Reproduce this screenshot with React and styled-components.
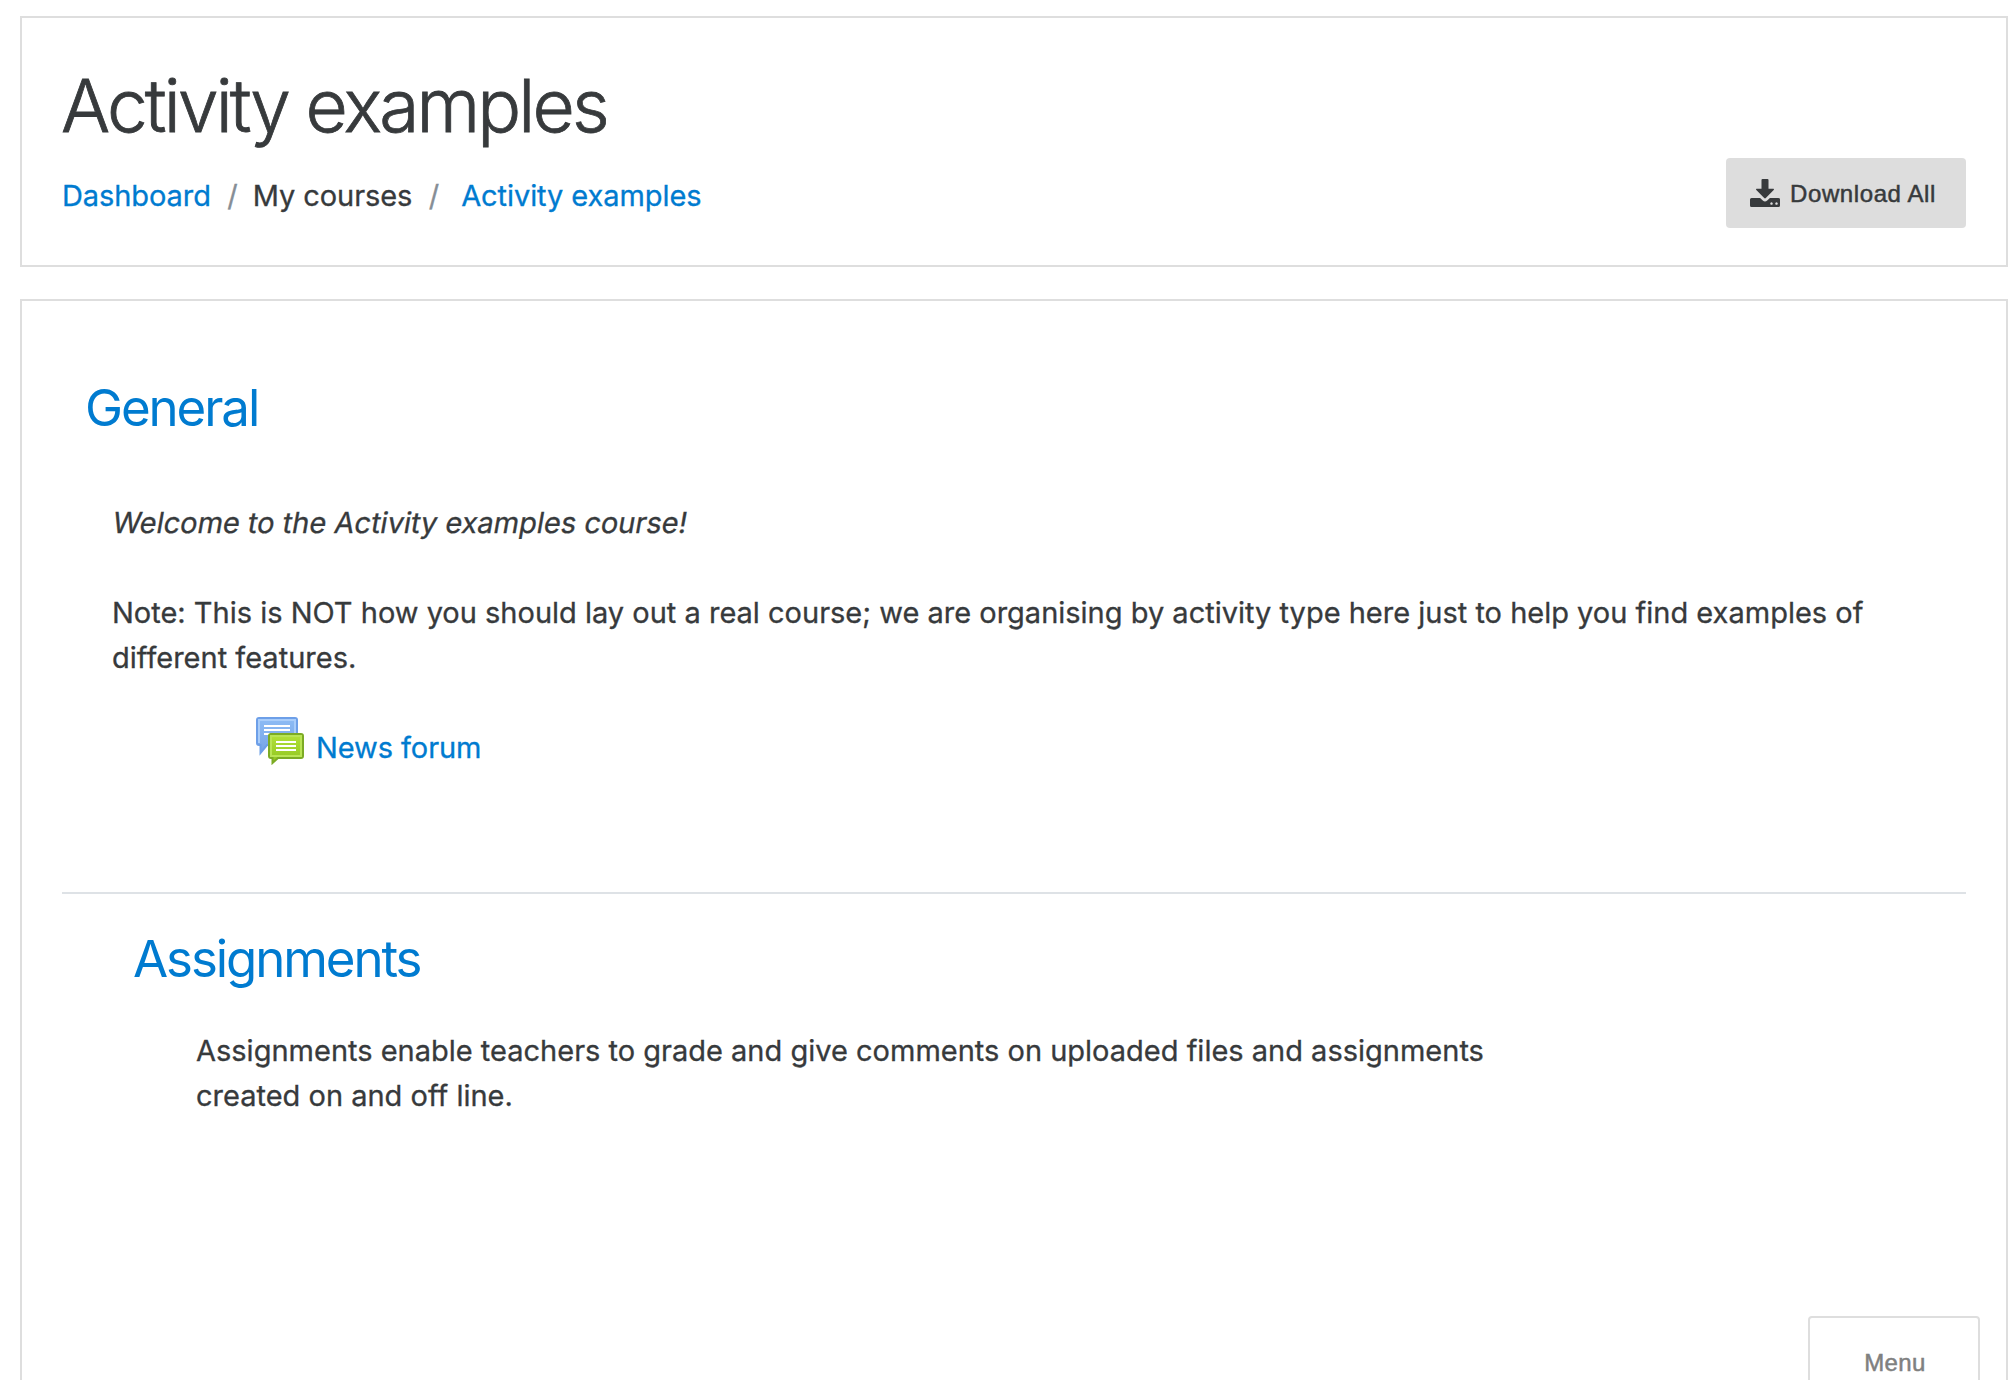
import React from 'react';
import styled, { createGlobalStyle } from 'styled-components';

function App() {
  return (
    <Page>
      <GlobalStyle />
      <Header>
        <div>
          <Title>Activity examples</Title>
          <Breadcrumb>
            <Link href="#">Dashboard</Link>
            <Slash>/</Slash>
            <span>My courses</span>
            <Slash>/</Slash>
            <LastCrumb href="#">Activity examples</LastCrumb>
          </Breadcrumb>
        </div>
        <DownloadButton>
          <DownloadIcon />
          <span>Download All</span>
        </DownloadButton>
      </Header>
      <Content>
        <GeneralSection>
          <SectionTitle>General</SectionTitle>
          <GeneralSummary>
            <Welcome>Welcome to the Activity examples course!</Welcome>
            <Note>
              Note: This is NOT how you should lay out a real course; we are
              organising by activity type here just to help you find examples
              of
              <br />
              different features.
            </Note>
          </GeneralSummary>
          <Activity>
            <ForumIcon />
            <ActivityLink href="#">News forum</ActivityLink>
          </Activity>
        </GeneralSection>
        <Topic>
          <SectionTitle $topic>Assignments</SectionTitle>
          <TopicSummary>
            Assignments enable teachers to grade and give comments on uploaded
            files and assignments
            <br />
            created on and off line.
          </TopicSummary>
        </Topic>
      </Content>
      <MenuButton>Menu</MenuButton>
    </Page>
  );
}

function DownloadIcon() {
  return (
    <svg width="30" height="28" viewBox="0 0 30 28" fill="#373a3c">
      <path d="M12.500 0h5q1 0 1 1v8.800h4.700q1.400 0 .5 1.100L15.800 19q-.8.800-1.600 0L6.300 10.900q-.9-1.100.5-1.100h4.700V1q0-1 1-1z" />
      <path
        fillRule="evenodd"
        d="M1.500 19h8.600l2.700 2.600q2.200 2 4.400 0l2.700-2.600h8.600q1.500 0 1.500 1.500v6q0 1.500-1.500 1.500h-27q-1.500 0-1.500-1.500v-6q0-1.500 1.500-1.500zM21.500 23.300a1.250 1.250 0 1 0 .01 0zM26.500 23.300a1.250 1.250 0 1 0 .01 0z"
      />
    </svg>
  );
}

function ForumIcon() {
  return (
    <svg width="48" height="48" viewBox="0 0 48 48">
      <defs>
        <linearGradient id="blue" x1="0" y1="0" x2="0" y2="1">
          <stop offset="0" stopColor="#8dbcf5" />
          <stop offset="1" stopColor="#76a3e6" />
        </linearGradient>
        <linearGradient id="green" x1="0" y1="0" x2="0" y2="1">
          <stop offset="0" stopColor="#b4e23a" />
          <stop offset="1" stopColor="#8fc41f" />
        </linearGradient>
      </defs>
      <path
        d="M3 1h36q2 0 2 2v25H11l-6.500 8v-8H3q-2 0-2-2V3q0-2 2-2z"
        fill="url(#blue)"
        stroke="#6d9fe8"
        strokeWidth="2"
      />
      <path d="M3 26V3h36v13" fill="none" stroke="#a9cdfa" strokeWidth="2" />
      <path d="M8 9h26M8 13h26M8 17h6" stroke="#fff" strokeWidth="2" />
      <path
        d="M15 17h30q2 0 2 2v20q0 2-2 2H22l-5.500 5v-5H15q-2 0-2-2V19q0-2 2-2z"
        fill="url(#green)"
        stroke="#7cab24"
        strokeWidth="2"
      />
      <path d="M15 19h30v20H15z" fill="none" stroke="#b9e455" strokeWidth="2" />
      <path d="M20 25h20M20 29h20M20 33h20" stroke="#fff" strokeWidth="2" />
    </svg>
  );
}

export default App;

const GlobalStyle = createGlobalStyle`
  * {
    box-sizing: border-box;
  }
  body {
    margin: 0;
    background: #fff;
    color: #373a3c;
    font-family: Inter, "Liberation Sans", sans-serif;
    font-size: 29px;
    line-height: 45px;
    -webkit-text-stroke: 0.3px;
  }
`;

const Page = styled.div`
  display: flex;
  flex-direction: column;
  gap: 32px;
  height: 1380px;
  padding: 16px 6px 0 20px;
  overflow: hidden;
`;

const Panel = styled.div`
  border: 2px solid #dedede;
  background: #fff;
`;

const Header = styled(Panel)`
  display: flex;
  flex-shrink: 0;
  justify-content: space-between;
  align-items: flex-start;
  height: 251px;
  padding: 43px 40px 0;
`;

const Title = styled.h1`
  margin: 0 0 22px -1px;
  font-size: 73px;
  font-weight: 300;
  line-height: 90px;
  letter-spacing: -2.88px;
  white-space: nowrap;
  -webkit-text-stroke: 0.8px;
`;

const Breadcrumb = styled.nav`
  display: flex;
  letter-spacing: -0.08px;
  white-space: nowrap;
`;

const Link = styled.a`
  color: #007bd0;
  text-decoration: none;
`;

const LastCrumb = styled(Link)`
  margin-left: 7px;
`;

const Slash = styled.span`
  padding: 0 15px 0 16.5px;
  color: #868e96;
`;

const DownloadButton = styled.button`
  display: flex;
  align-items: center;
  gap: 10px;
  width: 240px;
  height: 70px;
  margin-top: 97px;
  padding: 0 0 0 24px;
  border: 0;
  border-radius: 4px;
  background: #ddd;
  color: #373a3c;
  font-family: 'Liberation Sans', sans-serif;
  font-size: 24px;
  letter-spacing: 0.6px;
  white-space: nowrap;
  -webkit-text-stroke: 0.5px;

  span {
    padding-top: 2px;
  }
`;

const Content = styled(Panel)`
  height: 1200px;
  flex-shrink: 0;
  padding: 75px 40px 0;
`;

const GeneralSection = styled.section`
  padding-bottom: 122px;
  border-bottom: 2px solid #dee2e6;
`;

const SectionTitle = styled.h2`
  margin: 0 0 0 ${props => (props.$topic ? '71px' : '23px')};
  color: #007bd0;
  font-size: 51px;
  font-weight: 400;
  line-height: 63px;
  letter-spacing: -2.1px;
  -webkit-text-stroke: 0;
`;

const GeneralSummary = styled.div`
  margin: 61px 0 45px 50px;
  white-space: nowrap;
`;

/* slanted upright letters, so that the a keeps both storeys */
const Welcome = styled.p`
  margin: 0 0 45px 1px;
  transform: skewX(-10deg);
`;

const Note = styled.p`
  margin: 0;
`;

const Activity = styled.div`
  display: flex;
  gap: 12px;
  height: 45px;
  margin-left: 194px;

  svg {
    flex-shrink: 0;
    margin-top: -8px;
  }
`;

const ActivityLink = styled(Link)`
  letter-spacing: -0.08px;
  white-space: nowrap;
`;

const Topic = styled.section`
  padding-top: 33px;
`;

const TopicSummary = styled.p`
  margin: 38px 0 0 134px;
  white-space: nowrap;
`;

const MenuButton = styled.button`
  position: fixed;
  top: 1316px;
  right: 34px;
  width: 172px;
  height: 94px;
  padding: 0 0 0 2px;
  border: 2px solid #dedede;
  border-radius: 4px;
  background: #fff;
  color: #808080;
  font-family: 'Liberation Sans', sans-serif;
  font-size: 24px;
  letter-spacing: 0.4px;
  -webkit-text-stroke: 0.5px;
`;
